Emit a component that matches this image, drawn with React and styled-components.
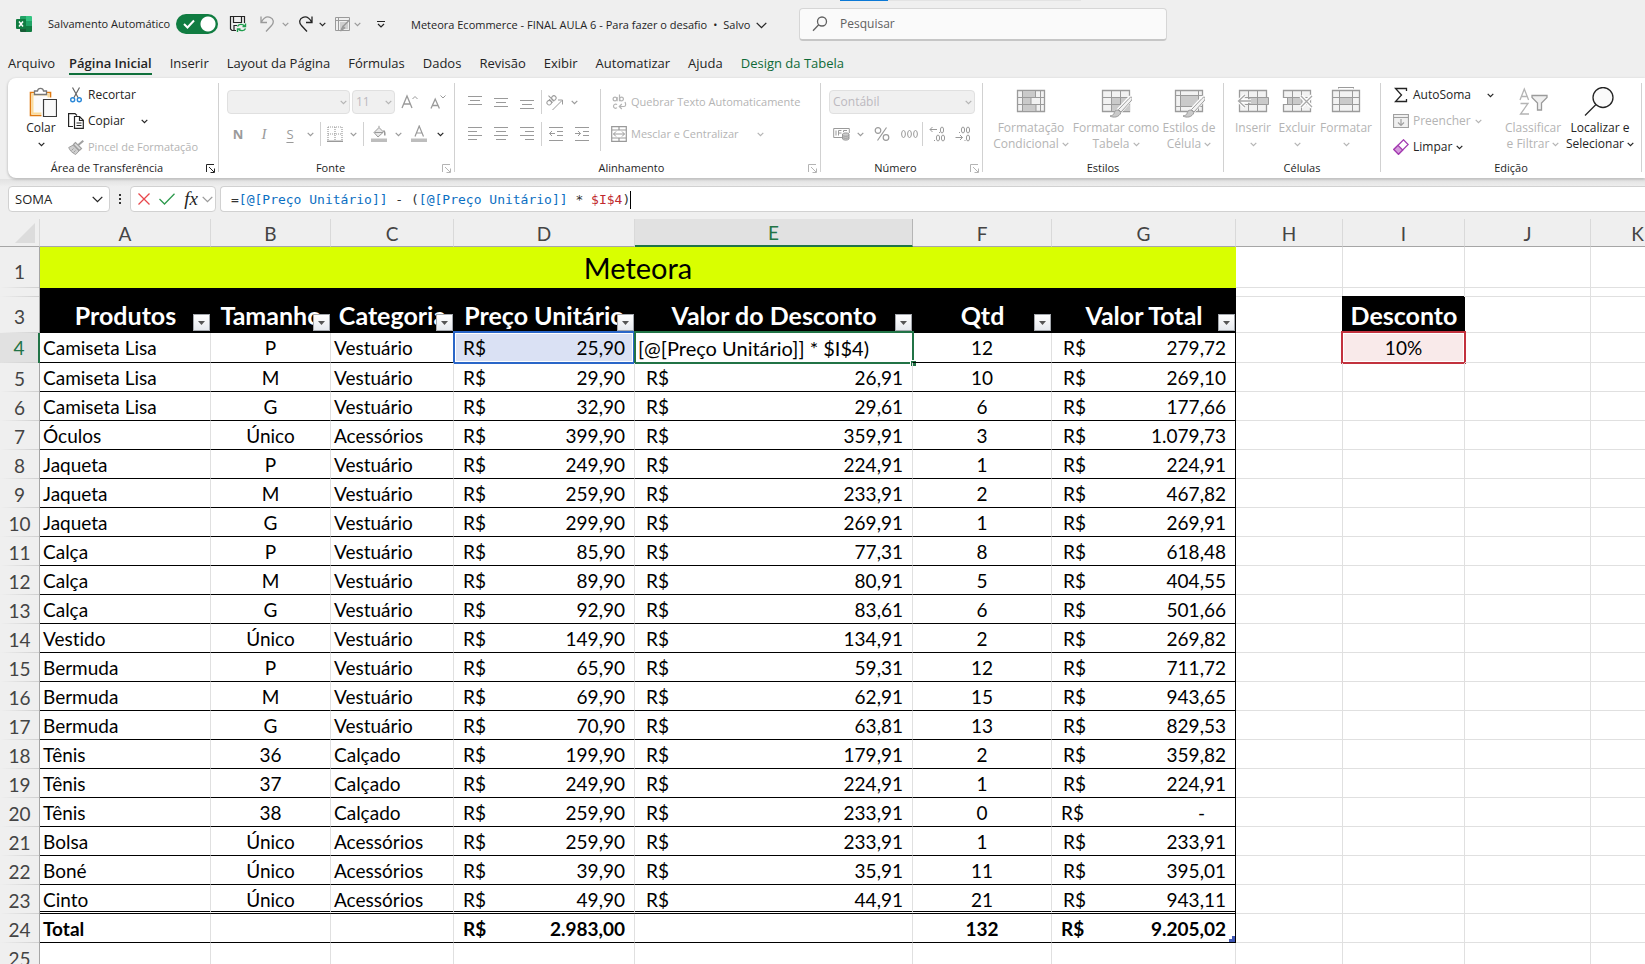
import React from "react";
import styled, { createGlobalStyle, css } from "styled-components";

const UI = `"Open Sans", "Noto Sans", sans-serif`;
const SHEET = `Lato, "Open Sans", sans-serif`;
const MONO = `"DejaVu Sans Mono", "Liberation Mono", monospace`;
const INK = "#242424";
const OFF = "#b4b4b4";
const GREEN = "#217346";
const LINE = "#e0e0e0";

const Global = createGlobalStyle`
  *, *::before, *::after { box-sizing: border-box; }
  html, body { margin: 0; background: #efefef; }
  button, input, select { font: inherit; color: inherit; }
  button { padding: 0; border: 0; background: none; }
  svg { display: block; flex: none; }
`;

const Window = styled.div`
  display: flex;
  flex-direction: column;
  height: 100vh;
  overflow: hidden;
  font: 12px/16px ${UI};
  color: ${INK};
  background: #efefef;
`;

/* ---------- title bar ---------- */

const TitleBar = styled.header`
  position: relative;
  display: flex;
  align-items: center;
  height: 48px;
  padding-left: 16px;
  flex: none;
  white-space: nowrap;
  font-size: 11px;
`;

const LoadStrip = styled.div`
  position: absolute;
  top: 0;
  left: 840px;
  width: 241px;
  height: 1px;
  background: linear-gradient(to right, #0a78d6 48px, #e3e3e3 48px);
`;

const AutoSave = styled.label`
  display: flex;
  align-items: center;
  justify-content: space-between;
  width: 170px;
  margin-left: 16px;
`;

const SwitchBox = styled.span`
  position: relative;
  display: flex;
  color: #fff;
  svg {
    position: absolute;
    left: 7px;
    top: 5px;
  }
`;

const Switch = styled.input`
  appearance: none;
  width: 42px;
  height: 20px;
  margin: 0;
  border-radius: 10px;
  background: radial-gradient(circle at 32px 10px, #fff 7px, #107c41 8px);
`;

const QuickBar = styled.div`
  display: flex;
  align-items: center;
  width: 193px;
  padding-left: 4px;
`;

const Pair = styled.div`
  display: flex;
  margin-right: 5px;
`;

const Title = styled.button`
  display: flex;
  align-items: center;
  gap: 6px;
  width: 366px;
  padding-top: 2px;
`;

const Search = styled.label`
  display: flex;
  align-items: center;
  gap: 12px;
  width: 368px;
  height: 33px;
  margin-left: 22px;
  padding-left: 12px;
  border: 1px solid #d6d6d6;
  border-bottom: 2px solid #c6c6c6;
  border-radius: 4px;
  background: #fafafa;
  color: #616161;
  input {
    flex: 1;
    border: 0;
    background: none;
    outline: 0;
    padding: 0;
    font-size: 12px;
  }
  input::placeholder {
    color: #616161;
    opacity: 1;
  }
`;

/* ---------- tabs ---------- */

const Tabs = styled.nav`
  display: flex;
  gap: 18px;
  height: 30px;
  padding: 5px 0 0 8px;
  flex: none;
  white-space: nowrap;
`;

const Tab = styled.a`
  height: 22px;
  margin-right: ${(p) => (p.$file ? -4 : 0)}px;
  font-size: 13px;
  line-height: 20px;
  text-decoration: none;
  color: ${(p) => (p.$accent ? "#0e6a37" : INK)};
  ${(p) =>
    p.$active &&
    css`
      font-weight: 600;
      border-bottom: 2px solid #0f703b;
    `}
`;

/* ---------- ribbon ---------- */

const Ribbon = styled.div`
  display: flex;
  height: 100px;
  margin: 0 0 1px 8px;
  padding-top: 5px;
  flex: none;
  border-radius: 8px 0 0 8px;
  background: #fff;
  box-shadow: 0 1px 3px rgba(0, 0, 0, 0.28);
  position: relative;
`;

const GroupBox = styled.section`
  display: flex;
  flex-direction: column;
  flex: none;
  width: ${(p) => p.$w}px;
  height: 94px;
  background: linear-gradient(#d1d1d1, #d1d1d1) right top / 1px 89px no-repeat;
`;

const GroupBody = styled.div`
  display: flex;
  height: 76px;
  padding-left: ${(p) => p.$pad}px;
`;

const GroupFoot = styled.div`
  display: flex;
  align-items: center;
  height: 18px;
  padding-right: 1px;
  h2 {
    flex: 1;
    margin: 0;
    font-size: 11px;
    font-weight: 400;
    text-align: center;
  }
  button {
    width: 12px;
    color: ${(p) => (p.$on ? INK : OFF)};
  }
`;

const Rows = styled.div`
  display: flex;
  flex-direction: column;
  gap: 8px;
  padding: 7px 0 0 ${(p) => p.$pad || 0}px;
`;

const Row = styled.div`
  display: flex;
  align-items: center;
  height: 24px;
  gap: ${(p) => p.$gap || 0}px;
  padding-left: ${(p) => p.$pad || 0}px;
`;

const SmallCol = styled.div`
  display: flex;
  flex-direction: column;
  gap: 2px;
  width: ${(p) => p.$w}px;
  margin-left: ${(p) => p.$ml || 0}px;
`;

const LabelBtn = styled.button`
  display: flex;
  align-items: center;
  height: 24px;
  gap: 4px;
  font-size: ${(p) => (p.$long ? 11 : 12)}px;
  white-space: nowrap;
  color: ${(p) => (p.disabled ? OFF : INK)};
  span {
    margin-right: ${(p) => p.$gap || 0}px;
  }
`;

const IconBtn = styled.button`
  display: flex;
  align-items: center;
  justify-content: center;
  width: ${(p) => p.$w || 26}px;
  height: 24px;
  color: ${(p) => (p.disabled ? "#9a9a9a" : INK)};
`;

const BigBtn = styled.button`
  display: flex;
  flex-direction: column;
  align-items: center;
  justify-content: flex-start;
  width: ${(p) => p.$w}px;
  height: 74px;
  padding-top: 4px;
  white-space: nowrap;
  color: ${(p) => (p.disabled ? OFF : INK)};
  > span {
    display: flex;
    align-items: center;
    justify-content: center;
    gap: 3px;
    height: 16px;
  }
  > svg {
    margin-bottom: 1px;
  }
`;

const Sep = styled.i`
  width: 1px;
  height: ${(p) => p.$h || 24}px;
  margin: ${(p) => p.$mt || 0}px ${(p) => (p.$m === undefined ? 3 : p.$m)}px 0;
  background: #d1d1d1;
`;

const Picker = styled.span`
  position: relative;
  display: flex;
  width: ${(p) => p.$w}px;
  height: 24px;
  color: ${OFF};
  select {
    appearance: none;
    width: 100%;
    padding: 0 3px;
    border: 1px solid #e0e0e0;
    border-radius: 4px;
    background: #f0f0f0;
    color: #bcb9bf;
    opacity: 1;
  }
  svg {
    position: absolute;
    right: 3px;
    top: 10px;
  }
`;

/* ---------- formula bar ---------- */

const FormulaRow = styled.div`
  display: flex;
  align-items: center;
  height: 40px;
  padding-left: 8px;
  flex: none;
  background: linear-gradient(#e2e2e2, #efefef 8px);
`;

const Field = styled.div`
  display: flex;
  align-items: center;
  height: 26px;
  border: 1px solid #d1d1d1;
  border-radius: 4px;
  background: #fff;
`;

const NameBox = styled(Field)`
  width: 102px;
  padding: 0 6px;
  input {
    flex: 1;
    min-width: 0;
    padding: 0;
    border: 0;
    outline: 0;
    font-size: 13px;
  }
`;

const Dots = styled.span`
  width: 20px;
  display: flex;
  justify-content: center;
`;

const EditBox = styled(Field)`
  width: 86px;
  padding-left: 5px;
`;

const FormulaBox = styled(Field)`
  flex: 1;
  margin-left: 4px;
  padding: 2px 0 0 10px;
  border-right: 0;
  border-radius: 4px 0 0 4px;
  font: 13px/20px ${MONO};
  white-space: pre;
  outline: 0;
  color: #333;
`;

const Ref = styled.span`
  color: ${(p) => p.$c};
`;

const Caret = styled.i`
  width: 1px;
  height: 18px;
  background: #000;
`;

const Fx = styled.span`
  font: italic 19px/20px "Liberation Serif", serif;
`;

/* ---------- sheet ---------- */

const SheetArea = styled.main`
  flex: 1;
  min-height: 0;
  overflow: hidden;
  background: #fff;
`;

const Grid = styled.table`
  table-layout: fixed;
  width: 1685px;
  border-collapse: separate;
  border-spacing: 0;
  font: 19px/26px ${SHEET};
  font-variant-ligatures: none;
  color: #000;
  td, th {
    padding: 0;
    white-space: nowrap;
  }
`;

const ColHead = styled.th`
  height: 28px;
  line-height: 24px;
  font-weight: 400;
  vertical-align: bottom;
  color: ${(p) => (p.$on ? GREEN : "#444")};
  border-right: 1px solid ${(p) => (p.$on ? "#b5b5b5" : "#d9d9d9")};
  border-bottom: ${(p) => (p.$on ? `2px solid ${GREEN}` : "1px solid #a6a6a6")};
  background: ${(p) => (p.$on ? "#e1e1e1" : "#efefef")};
`;

const Corner = styled(ColHead)`
  svg {
    margin: 0 0 3px 15px;
  }
`;

const RowHead = styled.th`
  font-weight: 400;
  vertical-align: ${(p) => (p.$on ? "middle" : "bottom")};
  text-align: center;
  color: ${(p) => (p.$on ? GREEN : "#444")};
  border-right: ${(p) => (p.$on ? `2px solid ${GREEN}` : "1px solid #a6a6a6")};
  line-height: ${(p) => (p.$tall ? 32 : 26)}px;
  background: linear-gradient(to right, ${(p) => (p.$on ? "#e1e1e1" : "#efefef")}, #cfcfcf) left bottom / 100% 1px no-repeat,
    ${(p) => (p.$on ? "#e1e1e1" : "#efefef")};
`;

const Tr = styled.tr`
  height: ${(p) => p.$h}px;
`;

const Cell = styled.td`
  position: relative;
  vertical-align: ${(p) => (p.$first ? "middle" : "bottom")};
  line-height: ${(p) => (p.$double ? 22 : 26)}px;
  text-align: ${(p) => p.$align || "left"};
  border-right: 1px solid ${(p) => (p.$edge ? "#000" : LINE)};
  border-bottom: ${(p) => (p.$double ? "3px double #000" : p.$data ? "1px solid #000" : `1px solid ${LINE}`)};
  font-weight: ${(p) => (p.$bold ? 700 : 400)};
`;

const Text = styled.div`
  padding-left: 3px;
`;

const Banner = styled.td`
  background: #d9ff00;
  text-align: center;
  font-size: 29px;
  line-height: 40px;
`;

const Black = styled.td`
  background: #000;
`;

const HeadCell = styled.th`
  position: relative;
  vertical-align: bottom;
  background: #000;
  color: #fff;
  font-size: 25px;
  line-height: 36px;
  font-weight: 700;
  overflow: hidden;
  box-shadow: ${(p) => (p.$boxed ? "-1px -1px 0 #000" : "none")};
`;

const HeadText = styled.div`
  display: flex;
  justify-content: center;
`;

const FilterBtn = styled.button`
  position: absolute;
  right: 1px;
  bottom: 2px;
  display: flex;
  align-items: center;
  justify-content: center;
  width: 17px;
  height: 17px;
  border: 1px solid #a3a7ad;
  background: linear-gradient(#fff, #e6e9ee);
`;

const Money = styled.div`
  position: relative;
  display: flex;
  justify-content: space-between;
  padding: 0 ${(p) => (p.$zero ? 30 : 9)}px 0 ${(p) => p.$pad}px;
`;

const Mark = styled.div`
  position: absolute;
  inset: ${(p) => p.$inset};
  border: 2px solid ${(p) => p.$c};
  background: ${(p) => p.$fill || "none"};
  box-shadow: inset 0 0 0 1px #fff;
`;

const Handle = styled.i`
  position: absolute;
  right: -4px;
  bottom: -4px;
  width: 6px;
  height: 6px;
  border: solid #fff;
  border-width: 1px 0 0 1px;
  background: ${GREEN};
`;

const Over = styled.div`
  position: relative;
  padding: 0 ${(p) => p.$pad || 0}px;
  font-size: ${(p) => (p.$edit ? 20 : 19)}px;
`;

const ResizeMark = styled.i`
  position: absolute;
  right: 0;
  bottom: 0;
  width: 6px;
  height: 6px;
  background: #3f56b5;
  clip-path: polygon(50% 0, 100% 0, 100% 100%, 0 100%, 0 50%, 50% 50%);
`;

/* ---------- icons ---------- */

const Svg = ({ w = 16, h = 16, children, sw = 1, ...rest }) => (
  <svg width={w} height={h} viewBox={`0 0 ${w} ${h}`} fill="none" stroke="currentColor" strokeWidth={sw} aria-hidden="true" {...rest}>
    {children}
  </svg>
);

const Chev = ({ c, w = 7 }) => (
  <svg width={w} height={w === 7 ? 5 : 7} viewBox={w === 7 ? "0 0 7 5" : "0 0 11 7"} fill="none" stroke={c || "currentColor"} strokeWidth={w === 7 ? 1.2 : 1.3} aria-hidden="true">
    <path d={w === 7 ? "M.7.9l2.8 2.8L6.3.9" : "M.7.9l4.8 4.8L10.3.9"} />
  </svg>
);

const ChevBtn = ({ on, label, w = 14 }) => (
  <IconBtn $w={w} disabled={!on} aria-label={label}>
    <Chev />
  </IconBtn>
);

const ExcelIcon = () => (
  <svg width="16" height="16" viewBox="0 0 16 16" aria-hidden="true">
    <path d="M4 1a1 1 0 011-1h5v5H4z" fill="#21a366" />
    <path d="M10 0h5a1 1 0 011 1v4h-6z" fill="#33c481" />
    <path d="M4 5h6v5H4z" fill="#107c41" />
    <path d="M10 5h6v5h-6z" fill="#21a366" />
    <path d="M4 10h6v6H5a1 1 0 01-1-1z" fill="#185c37" />
    <path d="M10 10h6v5a1 1 0 01-1 1h-5z" fill="#107c41" />
    <rect y="3" width="10" height="10" rx="1" fill="#107c41" />
    <path d="M3 5.500l4 5M7 5.500l-4 5" stroke="#fff" strokeWidth="1.500" />
  </svg>
);

const SaveIcon = () => (
  <Svg w={18} h={18} sw={1.2}>
    <path d="M7 15.500H3L1.500 14V1.500h14V8M4.500 1.500v6h8v-6M5 15v-4.500h3" />
    <path d="M8.500 11.500c1-2.500 5-3 7-.5M16.500 8.500v3h-3M16.500 13.500c-1 2.500-5 3-7 .5M8.500 17v-3h3" stroke="#1f9d4d" strokeWidth="1.400" />
  </Svg>
);

const Undo = () => (
  <Svg w={16} h={18} sw={1.3}>
    <path d="M2 1.500V7.500h6M2.300 7.200C4.500 3 8 1.300 11 2.300c3.500 1.200 4.300 5 1.800 7.900L7 16.500" />
  </Svg>
);
const Redo = () => (
  <Svg w={16} h={18} sw={1.3}>
    <path d="M14 1.500V7.500H8M13.700 7.200C11.500 3 8 1.300 5 2.300 1.500 3.500.7 7.300 3.200 10.200L9 16.500" />
  </Svg>
);
const FormIcon = () => (
  <Svg w={17} h={16}>
    <path d="M1.500 1.500h14v13h-14zM1.500 4.500h14M4.500 1.500v13" />
    <path d="M6 6h8v7H6z" fill="#cfcfcf" stroke="none" />
    <path d="M15.500 4l-7 7M9 10.500l1.500 1.500-4 3z" fill="#bbb" strokeWidth="1.500" />
  </Svg>
);
const MagIcon = () => (
  <Svg w={16} h={16} sw={1.3}>
    <circle cx="10" cy="5.500" r="4.500" />
    <path d="M6.700 8.800L1 14.700" />
  </Svg>
);

const PasteIcon = () => (
  <Svg w={32} h={32}>
    <path d="M5.500 5.500h20v23h-20z" fill="#fff" stroke="#e07b12" strokeWidth="1.600" />
    <path d="M7.500 7.500h16v19h-16z" fill="#fafafa" stroke="#fbdc9a" strokeWidth="2" />
    <path d="M9.500 7.500V4h3c.5-3.500 5.500-3.500 6 0h3v3.500z" fill="#fff" stroke="#777" strokeWidth="1.300" />
    <path d="M17.500 11.500h15v19h-15z" fill="#fff" stroke="#fff" strokeWidth="2" />
    <path d="M18.500 12.500h13v17h-13z" fill="#fafafa" stroke="#3a3a3a" strokeWidth="1.200" />
  </Svg>
);
const CutIcon = () => (
  <Svg>
    <path d="M4.500.5l5.800 10.500M11.500.5L5.700 11" stroke="#666" strokeWidth="1.200" />
    <circle cx="4.700" cy="12.800" r="2" stroke="#2b88d8" strokeWidth="1.400" />
    <circle cx="11.300" cy="12.800" r="2" stroke="#2b88d8" strokeWidth="1.400" />
  </Svg>
);
const CopyIcon = () => (
  <Svg w={16} h={16} sw={1.2}>
    <path d="M5 13.500H.600V.600H7L9 2.500" />
    <path d="M6.500 3.500h5l3.800 3.800v8.100H6.500z" fill="#fff" />
    <path d="M11.500 3.500v4h4M8.500 10h5M8.500 12.500h5" />
  </Svg>
);
const BrushIcon = () => (
  <Svg stroke="#a0a0a0">
    <path d="M15.300 1.700l-5 4.300" strokeWidth="2" />
    <path d="M7.500 3.500l-2 2 6 6 2-2z" fill="#ddd" strokeWidth="1.200" />
    <path d="M5 6.200L.700 8.500c1 3 3.500 5.500 7 7L11 12z" fill="#cfcfcf" />
    <path d="M3.500 11.500L5.500 9.500M5.500 13.500l2-2" />
  </Svg>
);
const Launch = () => (
  <Svg w={9} h={9}>
    <path d="M8 .5H.500V8M3 3l5 5M8.500 4.500v4h-4" />
  </Svg>
);

const GrowA = ({ up }) => (
  <Svg w={18} h={16} sw={1.3}>
    <path d={up ? "M1 14L6 2l5 12M2.700 10h6.600" : "M2 14.500L6.200 5l4.200 9.500M3.500 11.500h5.400"} />
    <path d={up ? "M11.500 5L14 2.500 16.500 5" : "M11.500 1.500L14 4l2.500-2.500"} strokeWidth="1" />
  </Svg>
);
const Glyph = styled.span`
  font: ${(p) => (p.$bold ? 700 : 400)} ${(p) => (p.$italic ? 15 : 13)}px/18px ${UI};
  font-family: ${(p) => (p.$italic ? `"Liberation Serif", serif` : UI)};
  font-style: ${(p) => (p.$italic ? "italic" : "normal")};
  text-decoration: ${(p) => (p.$under ? "underline" : "none")};
  text-underline-offset: 3px;
`;
const BordersIcon = () => (
  <Svg>
    <path d="M1 1h14M1 1v14M15 1v14M8 1v14M1 8h14" strokeDasharray="1 1" strokeWidth="1.200" />
    <path d="M0 15.300h16" strokeWidth="1.500" />
  </Svg>
);
const FillIcon = () => (
  <Svg w={16} h={18}>
    <path d="M3 7.500l5-5 4.500 4.500-5.500 5zM8 2.500V.800M3.500 7.500h8.500" fill="#e8e8e8" />
    <path d="M12.500 5.500c1.500 1 1.500 3 1.300 5" strokeWidth="1.500" />
    <path d="M0 13.500h16v3.500H0z" fill="#bdbdbd" stroke="none" />
  </Svg>
);
const FontColorIcon = () => (
  <Svg w={16} h={18}>
    <path d="M4 11.500L8.200 1l4.300 10.500M5.300 8h5.800" strokeWidth="1.200" />
    <path d="M0 13.500h16v3.500H0z" fill="#bdbdbd" stroke="none" />
  </Svg>
);
const Lines = ({ rows }) => (
  <Svg w={14} h={16}>
    {rows.map(([x, y, l]) => (
      <path key={y} d={`M${x} ${y}.5h${l}`} />
    ))}
  </Svg>
);
const Orient = () => (
  <Svg w={18} h={17}>
    <g transform="rotate(-45 6 8)">
      <circle cx="3.500" cy="6.500" r="2.200" />
      <path d="M6 4v5" />
      <path d="M8 1v8" />
      <circle cx="10.200" cy="6.500" r="2.200" />
    </g>
    <path d="M6.500 16L16 6.500M12 6h4.500v4.500" />
  </Svg>
);
const Indent = ({ out }) => (
  <Svg w={16} h={14}>
    <path d="M1 .5h14M1 13.500h14M9 4.500h6M9 8.500h6" />
    <path d={out ? "M7 6.500H1.500M4 4L1.500 6.500 4 9" : "M1 6.500h5.500M4 4l2.500 2.500L4 9"} />
  </Svg>
);
const WrapIcon = () => (
  <Svg w={16} h={16} sw={1.2}>
    <circle cx="4" cy="5" r="1.900" />
    <path d="M6.100 3v4.300M8.500.500v6.800" />
    <circle cx="10.500" cy="5" r="1.900" />
    <path d="M6 10.700c-1-1-3.500-.7-3.500 1.500s2.500 2.500 3.500 1.500M14 8c1 2 1 4.500-1 4.500H8.500M10.800 10l-2.500 2.500 2.500 2.500" />
  </Svg>
);
const MergeIcon = () => (
  <Svg>
    <path d="M.700.700h14.600v14.600H.700zM.700 4h14.600M.700 12h14.600M8 .7V4M8 12v3.300" stroke="#999" strokeWidth="1.200" />
    <path d="M2.500 8h11M5 5.500L2.500 8 5 10.500M11 5.500L13.500 8 11 10.500" stroke="#999" />
  </Svg>
);
const MoneyIcon = () => (
  <Svg w={17} h={14}>
    <path d="M9 10.500H.700V1.500h15.600V6M3 3.500v5M5.500 8.500v-5h3M8.500 6h-3M10.500 5V3.500H14" />
    <path d="M9.500 7v5c1 1.500 5.500 1.500 6.500 0V7c-1-1.500-5.500-1.500-6.500 0zM9.500 8.500c1 1 5.500 1 6.500 0M9.500 10.500c1 1 5.500 1 6.500 0" fill="#ccc" />
  </Svg>
);
const PercentIcon = () => (
  <Svg sw={1.2}>
    <circle cx="4" cy="4.500" r="2.800" />
    <circle cx="12" cy="11.500" r="2.800" />
    <path d="M12.500 1.500l-9 13" />
  </Svg>
);
const ThousandIcon = () => (
  <Svg w={17} h={10}>
    {[2.5, 8.5, 14.5].map((x) => (
      <ellipse key={x} cx={x} cy="5" rx="1.900" ry="3.500" />
    ))}
  </Svg>
);
const DecIcon = ({ add }) => (
  <Svg w={16} h={16}>
    {(add ? [[13, 4], [9, 12], [14, 12]] : [[8, 4], [13, 4], [13, 12]]).map(([x, y]) => (
      <ellipse key={`${x}-${y}`} cx={x} cy={y} rx="1.600" ry="3" />
    ))}
    <path d={add ? "M10 6.500h1M5 14.500h1M8 3.500H1M3.500 1L1 3.500 3.500 6" : "M4 6.500h1M9.500 14.500h1M.500 11.500h7M5 9l2.500 2.500L5 14"} />
  </Svg>
);

const GREY = "#cacaca";
const Sheet3 = ({ children, brush }) => (
  <Svg w={32} h={32} stroke="#9b9b9b">
    <path d="M2.500 3.500h27v21h-27z" fill="#f2f2f2" strokeWidth="1.300" />
    {children}
    {brush && (
      <>
        <path d="M31.500 10.500L20 23l-5 6" stroke="#fff" strokeWidth="6" />
        <path d="M32 10.500c-1-.8-2 0-3 1L18.500 22.500l2.500 2.500L31 14c1-1.300 1.500-2.500 1-3.500z" fill="#f2f2f2" />
        <path d="M18 23c-3 0-3.500 1.500-4 3.500-.5 1.500-2 2-4 2.500 3.500 2 9 1.500 11-3.500z" fill={GREY} />
      </>
    )}
  </Svg>
);
const CondIcon = () => (
  <Sheet3>
    <path d="M8 4h12v6H8zM8 10h8v7H8zM8 17h13v7H8z" fill={GREY} stroke="none" />
    <path d="M7.500 4v20M20.500 4v6M16 10v7M21 17v7M25.500 4v20M3 10.500h27M3 17.500h27" />
  </Sheet3>
);
const TableIcon = () => (
  <Sheet3 brush>
    <path d="M12 11h18v13H12z" fill={GREY} stroke="none" />
    <path d="M11.500 4v20M20.500 4v20M3 10.500h27M3 17.500h27" />
  </Sheet3>
);
const StyleIcon = () => (
  <Sheet3 brush>
    <path d="M8 9h17v10H8z" fill={GREY} stroke="none" />
    <path d="M7.500 4v20M25.500 4v20M3 8.500h27M3 19.500h27" />
  </Sheet3>
);
const InsertIcon = () => (
  <Sheet3>
    <path d="M12 10.500h19.500v7H12z" fill={GREY} />
    <path d="M11.500 4v20M20.500 4v20M3 10.500h9M3 17.500h9" />
    <path d="M14 14H2M8 8l-6.500 6L8 20" stroke="#fff" strokeWidth="3.500" />
    <path d="M14 14H2M8 8l-6.500 6L8 20" stroke="#a8a8a8" strokeWidth="1.300" />
  </Sheet3>
);
const DeleteIcon = () => (
  <Sheet3>
    <path d="M1 11h5v6H1z" fill="#fff" stroke="none" />
    <path d="M6.500 10.500H21v7H6.500z" fill={GREY} />
    <path d="M11.500 4v20M20.500 4v6M20.500 18v6M2 10.500h28M2 17.500h28" />
    <path d="M20 9l11 11M31 9L20 20" stroke="#fff" strokeWidth="4" />
    <path d="M20 9l11 11M31 9L20 20" stroke="#a8a8a8" strokeWidth="1.300" />
  </Sheet3>
);
const FormatIcon = () => (
  <Sheet3>
    <path d="M10 11h12v6H10z" fill={GREY} stroke="none" />
    <path d="M9.500 4v20M22.500 4v20M3 10.500h27M3 17.500h27" />
    <path d="M8.500 0v1.500M23.500 0v1.500M8.500.500h15" />
  </Sheet3>
);
const SigmaIcon = () => (
  <Svg sw={1.3}>
    <path d="M13.500 4V1.500H2.500L8.500 8l-6 6.500h11V12" />
  </Svg>
);
const FillDown = () => (
  <Svg>
    <path d="M.500 1.500h15v13H.500zM.500 4.500h15" fill="#f0f0f0" stroke="#a0a0a0" strokeWidth="1.200" />
    <path d="M8 6v6.500M5 9.500l3 3 3-3" stroke="#a0a0a0" strokeWidth="1.200" />
  </Svg>
);
const EraserIcon = () => (
  <Svg>
    <path d="M.8 10.500L10.500.800 15.200 5.500 5.500 15.200z" fill="#fff" stroke="#a33bb0" strokeWidth="1.300" />
    <path d="M.8 10.500L5 6.300l4.700 4.700-4.200 4.200z" fill="#d59bdc" stroke="#a33bb0" strokeWidth="1.300" />
  </Svg>
);
const SortIcon = () => (
  <Svg w={32} h={32} sw={1.3}>
    <path d="M3 13L7.300 2l4.300 11M4.500 9.500H10M3.500 16.500h7.500l-7.500 10.500H12" />
    <path d="M15 8.500h15v2L24.500 16v7h-4v-7L15 10.500z" fill="#f0f0f0" stroke="#9b9b9b" />
  </Svg>
);
const FindIcon = () => (
  <Svg w={32} h={32} sw={1.3}>
    <circle cx="19" cy="10.500" r="10" fill="#fafafa" />
    <path d="M12 17.500L1 28.500" />
  </Svg>
);

/* ---------- pieces ---------- */

const Group = ({ w, pad, name, launch, on, children }) => (
  <GroupBox $w={w} aria-label={name}>
    <GroupBody $pad={pad}>{children}</GroupBody>
    <GroupFoot $on={on}>
      <h2>{name}</h2>
      {launch && (
        <button aria-label={`Opções de ${name}`}>
          <Launch />
        </button>
      )}
    </GroupFoot>
  </GroupBox>
);

const Big = ({ w, icon, a, b, on }) => (
  <BigBtn $w={w} disabled={!on}>
    {icon}
    <span>{a}</span>
    <span>
      {b}
      <Chev />
    </span>
  </BigBtn>
);

const TABS = ["Arquivo", "Página Inicial", "Inserir", "Layout da Página", "Fórmulas", "Dados", "Revisão", "Exibir", "Automatizar", "Ajuda", "Design da Tabela"];

const COLS = [40, 171, 120, 123, 181, 278, 139, 184, 107, 122, 126, 94];
const LETTERS = "ABCDEFGHIJK".split("");
const HEADS = ["Produtos", "Tamanho", "Categoria", "Preço Unitário", "Valor do Desconto", "Qtd", "Valor Total"];

const DATA = [
  ["Camiseta Lisa", "P", "Vestuário", "25,90", "", "12", "279,72"],
  ["Camiseta Lisa", "M", "Vestuário", "29,90", "26,91", "10", "269,10"],
  ["Camiseta Lisa", "G", "Vestuário", "32,90", "29,61", "6", "177,66"],
  ["Óculos", "Único", "Acessórios", "399,90", "359,91", "3", "1.079,73"],
  ["Jaqueta", "P", "Vestuário", "249,90", "224,91", "1", "224,91"],
  ["Jaqueta", "M", "Vestuário", "259,90", "233,91", "2", "467,82"],
  ["Jaqueta", "G", "Vestuário", "299,90", "269,91", "1", "269,91"],
  ["Calça", "P", "Vestuário", "85,90", "77,31", "8", "618,48"],
  ["Calça", "M", "Vestuário", "89,90", "80,91", "5", "404,55"],
  ["Calça", "G", "Vestuário", "92,90", "83,61", "6", "501,66"],
  ["Vestido", "Único", "Vestuário", "149,90", "134,91", "2", "269,82"],
  ["Bermuda", "P", "Vestuário", "65,90", "59,31", "12", "711,72"],
  ["Bermuda", "M", "Vestuário", "69,90", "62,91", "15", "943,65"],
  ["Bermuda", "G", "Vestuário", "70,90", "63,81", "13", "829,53"],
  ["Tênis", "36", "Calçado", "199,90", "179,91", "2", "359,82"],
  ["Tênis", "37", "Calçado", "249,90", "224,91", "1", "224,91"],
  ["Tênis", "38", "Calçado", "259,90", "233,91", "0", "-"],
  ["Bolsa", "Único", "Acessórios", "259,90", "233,91", "1", "233,91"],
  ["Boné", "Único", "Acessórios", "39,90", "35,91", "11", "395,01"],
  ["Cinto", "Único", "Acessórios", "49,90", "44,91", "21", "943,11"],
];

const Amount = ({ v, pad }) => (
  <Money $pad={pad} $zero={v === "-"}>
    <span>R$</span>
    <span>{v}</span>
  </Money>
);

const Blank = ({ n = 4 }) => Array.from({ length: n }, (_, i) => <Cell key={i} />);

const DataRow = ({ row, n }) => {
  const first = n === 4;
  const d = { $data: true, $double: n === 23, $first: first };
  return (
    <Tr $h={first ? 30 : 29}>
      <RowHead $on={first} scope="row">{n}</RowHead>
      <Cell {...d}><Text>{row[0]}</Text></Cell>
      <Cell {...d} $align="center">{row[1]}</Cell>
      <Cell {...d}><Text>{row[2]}</Text></Cell>
      <Cell {...d}>
        {first && <Mark $c="#2a66c8" $fill="#dae1f4" $inset="-2px -1px -2px -1px" />}
        <Amount v={row[3]} pad={9} />
      </Cell>
      <Cell {...d}>
        {first ? (
          <>
            <Mark $c={GREEN} $fill="#fff" $inset="-2px -2px -2px -1px" />
            <Over $edit $pad={3}>[@[Preço Unitário]] * $I$4)</Over>
            <Handle />
          </>
        ) : (
          <Amount v={row[4]} pad={11} />
        )}
      </Cell>
      <Cell {...d} $align="center">{row[5]}</Cell>
      <Cell {...d} $edge><Amount v={row[6]} pad={row[6] === "-" ? 9 : 11} /></Cell>
      {first ? (
        <>
          <Cell />
          <Cell $first $align="center">
            <Mark $c="#c2323e" $fill="#f9eaea" $inset="-2px -2px -2px -2px" />
            <Over>10%</Over>
          </Cell>
          <Blank n={2} />
        </>
      ) : (
        <Blank />
      )}
    </Tr>
  );
};

const alignRows = {
  top: [[0, 2, 14], [2, 6, 10], [0, 10, 14]],
  mid: [[0, 4, 14], [2, 8, 10], [0, 12, 14]],
  bot: [[0, 6, 14], [2, 10, 10], [0, 14, 14]],
  left: [[0, 1, 14], [0, 5, 9], [0, 9, 14], [0, 13, 9]],
  center: [[0, 1, 14], [2, 5, 10], [0, 9, 14], [2, 13, 10]],
  right: [[0, 1, 14], [5, 5, 9], [0, 9, 14], [5, 13, 9]],
};

const BLUE = "#0b6fc2";

export default function App() {
  return (
    <Window>
      <Global />
      <TitleBar>
        <LoadStrip />
        <ExcelIcon />
        <AutoSave>
          Salvamento Automático
          <SwitchBox>
            <Switch type="checkbox" role="switch" defaultChecked />
            <Svg w={12} h={10} sw={2}><path d="M1 5l3.500 3.500L11 1.500" /></Svg>
          </SwitchBox>
        </AutoSave>
        <QuickBar>
          <IconBtn $w={32} aria-label="Salvar"><SaveIcon /></IconBtn>
          <Pair>
            <IconBtn disabled aria-label="Desfazer"><Undo /></IconBtn>
            <ChevBtn label="Opções de desfazer" w={10} />
          </Pair>
          <Pair>
            <IconBtn $w={22} aria-label="Refazer"><Redo /></IconBtn>
            <ChevBtn on label="Opções de refazer" w={10} />
          </Pair>
          <Pair>
            <IconBtn $w={20} disabled aria-label="Formulário"><FormIcon /></IconBtn>
            <ChevBtn label="Opções de formulário" w={10} />
          </Pair>
          <IconBtn $w={28} aria-label="Personalizar barra">
            <Svg w={8} h={7}><path d="M0 .500h8M1 3l3 3 3-3" strokeWidth="1.200" /></Svg>
          </IconBtn>
        </QuickBar>
        <Title>
          <span>Meteora Ecommerce - FINAL AULA 6 - Para fazer o desafio</span>
          <span>•</span>
          <span>Salvo</span>
          <Chev w={11} />
        </Title>
        <Search>
          <MagIcon />
          <input type="search" placeholder="Pesquisar" aria-label="Pesquisar" />
        </Search>
      </TitleBar>

      <Tabs>
        {TABS.map((t, i) => (
          <Tab key={t} href="#" $file={i === 0} $active={i === 1} $accent={i === 10}>{t}</Tab>
        ))}
      </Tabs>

      <Ribbon>
        <Group w={211} pad={11} name="Área de Transferência" launch on>
          <Big w={44} icon={<PasteIcon />} a="Colar" on />
          <SmallCol $w={140} $ml={5}>
            <LabelBtn><CutIcon />Recortar</LabelBtn>
            <LabelBtn $gap={12}><CopyIcon /><span>Copiar</span><Chev /></LabelBtn>
            <LabelBtn $long disabled><BrushIcon />Pincel de Formatação</LabelBtn>
          </SmallCol>
        </Group>

        <Group w={236} pad={6} name="Fonte" launch>
          <Rows>
            <Row $gap={2} $pad={2}>
              <Picker $w={123}>
                <select disabled aria-label="Fonte"><option /></select>
                <Chev />
              </Picker>
              <Picker $w={43}>
                <select disabled aria-label="Tamanho da fonte"><option>11</option></select>
                <Chev />
              </Picker>
              <IconBtn disabled aria-label="Aumentar fonte"><GrowA up /></IconBtn>
              <IconBtn disabled aria-label="Diminuir fonte"><GrowA /></IconBtn>
            </Row>
            <Row>
              <IconBtn disabled><Glyph $bold>N</Glyph></IconBtn>
              <IconBtn disabled><Glyph $italic>I</Glyph></IconBtn>
              <IconBtn disabled><Glyph $under>S</Glyph></IconBtn>
              <ChevBtn label="Opções de sublinhado" />
              <Sep />
              <IconBtn $w={22} disabled aria-label="Bordas"><BordersIcon /></IconBtn>
              <ChevBtn label="Opções de bordas" />
              <Sep />
              <IconBtn $w={24} disabled aria-label="Cor de preenchimento"><FillIcon /></IconBtn>
              <ChevBtn label="Opções de preenchimento" />
              <IconBtn $w={28} disabled aria-label="Cor da fonte"><FontColorIcon /></IconBtn>
              <ChevBtn on label="Opções de cor" />
            </Row>
          </Rows>
        </Group>

        <Group w={366} pad={7} name="Alinhamento" launch>
          <Rows>
            <Row>
              <IconBtn disabled aria-label="Alinhar em cima"><Lines rows={alignRows.top} /></IconBtn>
              <IconBtn disabled aria-label="Alinhar no meio"><Lines rows={alignRows.mid} /></IconBtn>
              <IconBtn disabled aria-label="Alinhar embaixo"><Lines rows={alignRows.bot} /></IconBtn>
              <Sep $m={1} />
              <IconBtn $w={24} disabled aria-label="Orientação"><Orient /></IconBtn>
              <ChevBtn label="Opções de orientação" />
            </Row>
            <Row>
              <IconBtn disabled aria-label="Alinhar à esquerda"><Lines rows={alignRows.left} /></IconBtn>
              <IconBtn disabled aria-label="Centralizar"><Lines rows={alignRows.center} /></IconBtn>
              <IconBtn disabled aria-label="Alinhar à direita"><Lines rows={alignRows.right} /></IconBtn>
              <Sep $m={1} />
              <IconBtn disabled aria-label="Diminuir recuo"><Indent out /></IconBtn>
              <IconBtn disabled aria-label="Aumentar recuo"><Indent /></IconBtn>
            </Row>
          </Rows>
          <Sep $h={62} $mt={6} $m={5} />
          <Rows $pad={5}>
            <LabelBtn $long disabled><WrapIcon />Quebrar Texto Automaticamente</LabelBtn>
            <LabelBtn $long disabled $gap={14}><MergeIcon /><span>Mesclar e Centralizar</span><Chev /></LabelBtn>
          </Rows>
        </Group>

        <Group w={162} pad={8} name="Número" launch>
          <Rows>
            <Picker $w={146}>
              <select disabled aria-label="Formato de número"><option>Contábil</option></select>
              <Chev />
            </Picker>
            <Row>
              <IconBtn $w={24} disabled aria-label="Formato de contabilização"><MoneyIcon /></IconBtn>
              <ChevBtn label="Opções de moeda" />
              <IconBtn $w={30} disabled aria-label="Porcentagem"><PercentIcon /></IconBtn>
              <IconBtn $w={24} disabled aria-label="Separador de milhares"><ThousandIcon /></IconBtn>
              <Sep $m={1} />
              <IconBtn disabled aria-label="Aumentar casas decimais"><DecIcon add /></IconBtn>
              <IconBtn disabled aria-label="Diminuir casas decimais"><DecIcon /></IconBtn>
            </Row>
          </Rows>
        </Group>

        <Group w={241} pad={5} name="Estilos">
          <Big w={86} icon={<CondIcon />} a="Formatação" b="Condicional" />
          <Big w={84} icon={<TableIcon />} a="Formatar como" b="Tabela" />
          <Big w={62} icon={<StyleIcon />} a="Estilos de" b="Célula" />
        </Group>

        <Group w={157} pad={7} name="Células">
          <Big w={44} icon={<InsertIcon />} a="Inserir" />
          <Big w={44} icon={<DeleteIcon />} a="Excluir" />
          <Big w={54} icon={<FormatIcon />} a="Formatar" />
        </Group>

        <Group w={261} pad={12} name="Edição">
          <SmallCol $w={109}>
            <LabelBtn $gap={12}><SigmaIcon /><span>AutoSoma</span><Chev /></LabelBtn>
            <LabelBtn disabled><FillDown />Preencher<Chev /></LabelBtn>
            <LabelBtn><EraserIcon />Limpar<Chev /></LabelBtn>
          </SmallCol>
          <Big w={62} icon={<SortIcon />} a="Classificar" b="e Filtrar" />
          <Big w={72} icon={<FindIcon />} a="Localizar e" b="Selecionar" on />
        </Group>
      </Ribbon>

      <FormulaRow>
        <NameBox>
          <input defaultValue="SOMA" aria-label="Caixa de nome" />
          <button aria-label="Abrir nomes"><Chev w={11} /></button>
        </NameBox>
        <Dots>
          <Svg w={2} h={10} fill="#333" stroke="none"><path d="M0 0h2v2H0zM0 4h2v2H0zM0 8h2v2H0z" /></Svg>
        </Dots>
        <EditBox>
          <IconBtn $w={16} aria-label="Cancelar">
            <Svg w={12} h={12} stroke="#e8474c" sw={1.3}><path d="M.500.500l11 11M11.500.500L.500 11.500" /></Svg>
          </IconBtn>
          <IconBtn $w={30} aria-label="Inserir">
            <Svg w={16} h={12} stroke="#2e9a4e" sw={1.3}><path d="M.500 6l5 5L15.500.800" /></Svg>
          </IconBtn>
          <IconBtn $w={18} aria-label="Inserir função"><Fx>fx</Fx></IconBtn>
          <IconBtn $w={15} disabled aria-label="Mais funções"><Chev w={11} /></IconBtn>
        </EditBox>
        <FormulaBox role="textbox" aria-label="Barra de fórmulas" contentEditable suppressContentEditableWarning spellCheck={false}>
          =<Ref $c={BLUE}>[@[Preço Unitário]]</Ref>{" - ("}
          <Ref $c={BLUE}>[@[Preço Unitário]]</Ref>{" * "}
          <Ref $c="#c0282d">$I$4</Ref>)<Caret />
        </FormulaBox>
      </FormulaRow>

      <SheetArea>
        <Grid>
          <colgroup>
            {COLS.map((w, i) => <col key={i} style={{ width: w }} />)}
          </colgroup>
          <thead>
            <tr>
              <Corner aria-label="Selecionar tudo">
                <Svg w={20} h={20} stroke="none" fill="#dcdcdc"><path d="M20 0v20H0z" /></Svg>
              </Corner>
              {LETTERS.map((l) => <ColHead key={l} $on={l === "E"} scope="col">{l}</ColHead>)}
            </tr>
          </thead>
          <tbody>
            <Tr $h={41}>
              <RowHead $tall scope="row">1</RowHead>
              <Banner colSpan={7}>Meteora</Banner>
              <Blank />
            </Tr>
            <Tr $h={9}>
              <RowHead />
              <Black colSpan={7} />
              <Blank />
            </Tr>
            <Tr $h={36}>
              <RowHead $tall scope="row">3</RowHead>
              {HEADS.map((h) => (
                <HeadCell key={h}>
                  <HeadText>{h}</HeadText>
                  <FilterBtn aria-label={`Filtrar ${h}`}>
                    <Svg w={7} h={4} stroke="none" fill="#555"><path d="M0 0h7L3.500 4z" /></Svg>
                  </FilterBtn>
                </HeadCell>
              ))}
              <Cell />
              <HeadCell $boxed>Desconto</HeadCell>
              <Blank n={2} />
            </Tr>
            {DATA.map((r, i) => <DataRow key={i} row={r} n={i + 4} />)}
            <Tr $h={29}>
              <RowHead scope="row">24</RowHead>
              <Cell $data $bold><Text>Total</Text></Cell>
              <Cell $data />
              <Cell $data />
              <Cell $data $bold><Amount v="2.983,00" pad={9} /></Cell>
              <Cell $data />
              <Cell $data $bold $align="center">132</Cell>
              <Cell $data $bold $edge><Amount v="9.205,02" pad={9} /><ResizeMark /></Cell>
              <Blank />
            </Tr>
            <Tr $h={29}>
              <RowHead scope="row">25</RowHead>
              <Blank n={11} />
            </Tr>
          </tbody>
        </Grid>
      </SheetArea>
    </Window>
  );
}
